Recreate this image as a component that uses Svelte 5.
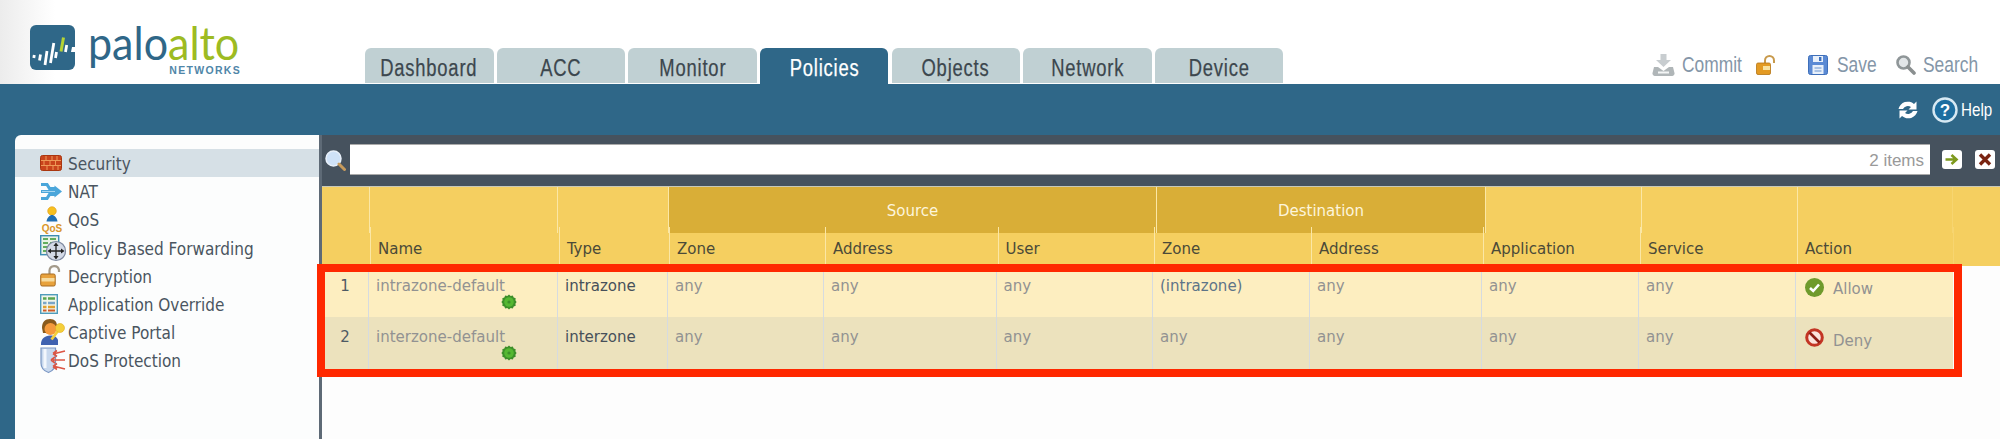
<script>
  const tabs = ['Dashboard', 'ACC', 'Monitor', 'Policies', 'Objects', 'Network', 'Device'];
  const active = 'Policies';
  const nav = ['Security', 'NAT', 'QoS', 'Policy Based Forwarding', 'Decryption', 'Application Override', 'Captive Portal', 'DoS Protection'];
  const labels = ['', 'Name', 'Type', 'Zone', 'Address', 'User', 'Zone', 'Address', 'Application', 'Service', 'Action', ''];
  const rows = [
    { n: 1, name: 'intrazone-default', type: 'intrazone', dest: '(intrazone)', action: 'Allow' },
    { n: 2, name: 'interzone-default', type: 'interzone', dest: 'any', action: 'Deny' }
  ];
</script>

{#snippet gear()}
  <svg class="gear" viewBox="0 0 16 16" width="16" height="16" aria-hidden="true">
    <path d="M8 .6l1.700 1.300 2.100-.4.9 1.900 2 .8-.3 2.100L15.600 8l-1.200 1.700.3 2.100-2 .8-.9 1.900-2.100-.4L8 15.400l-1.700-1.300-2.100.4-.9-1.900-2-.8.3-2.100L.4 8l1.200-1.700-.3-2.100 2-.8.9-1.900 2.100.4z" fill="#3d8f2a"/>
    <circle cx="8" cy="8" r="4.800" fill="#55b832"/>
    <circle cx="8" cy="8" r="1.600" fill="#3d8f2a"/>
  </svg>
{/snippet}

{#snippet navIcon(name)}
  {#if name === 'Security'}
    <svg viewBox="0 0 22 16" width="22" height="16" aria-hidden="true">
      <rect x=".5" y=".5" width="21" height="15" rx="2" fill="#c9441c" stroke="#a9360f"/>
      <path d="M1 5.500h20M1 10.500h20M6 1v4.500M12 1v4.500M17 1v4.500M4 5.500v5M10 5.500v5M15.500 5.500v5M7 10.500v4.500M13 10.500v4.500M18 10.500v4.500" stroke="#ee9a58" stroke-width="1"/>
    </svg>
  {:else if name === 'NAT'}
    <svg viewBox="0 0 22 19" width="22" height="19" aria-hidden="true">
      <path d="M1 2.500h6l2.500 4h6.500M1 9.500h15M1 16.500h6l2.500-4h6.500" fill="none" stroke="#4aa6da" stroke-width="3.200"/>
      <path d="M14.500 3.500l7.500 6-7.500 6z" fill="#4aa6da"/>
      <path d="M2 9.500h13" stroke="#bfe2f5" stroke-width=".8"/>
    </svg>
  {:else if name === 'QoS'}
    <svg viewBox="0 0 24 26" width="24" height="26" aria-hidden="true">
      <circle cx="12" cy="5" r="4.300" fill="#f7c020" stroke="#dd9a18" stroke-width=".6"/>
      <path d="M6.500 15.500c.5-4 3.500-6.500 5.500-6.500s5 2.500 5.500 6.500z" fill="#1f6fb4"/>
      <text x="12" y="25.500" text-anchor="middle" class="qos">QoS</text>
    </svg>
  {:else if name === 'Policy Based Forwarding'}
    <svg viewBox="0 0 26 26" width="26" height="26" aria-hidden="true">
      <rect x=".7" y=".7" width="18" height="19" fill="#e9f2e5" stroke="#3f8db4" stroke-width="1.400"/>
      <path d="M3 4h5M10 4h6M3 8h5M10 8h6M3 12h5M3 16h5" stroke="#62ad5e" stroke-width="2"/>
      <circle cx="16" cy="16" r="9.500" fill="#d3d9e6" stroke="#7e89a0" stroke-width="1.200"/>
      <path d="M16 10v12M10 16h12" stroke="#222" stroke-width="1.300"/>
      <path d="M16 7.500l2.600 3.500h-5.200zM16 24.500l2.600-3.500h-5.200zM7.500 16l3.500-2.600v5.200zM24.500 16L21 13.400v5.200z" fill="#222"/>
    </svg>
  {:else if name === 'Decryption'}
    <svg viewBox="0 0 20 23" width="20" height="23" aria-hidden="true">
      <path d="M9.500 10V6.500a4.800 4.800 0 0 1 9.500-.5v2" fill="none" stroke="#a39a8a" stroke-width="2.200"/>
      <rect x=".7" y="10" width="14.500" height="12" rx="1.500" fill="#e8a23c" stroke="#a66a20"/>
      <rect x="1.500" y="14" width="13" height="3.500" fill="#f6dca0"/>
    </svg>
  {:else if name === 'Application Override'}
    <svg viewBox="0 0 18 20" width="18" height="20" aria-hidden="true">
      <rect x=".7" y=".7" width="16.600" height="18.600" fill="#f1f5ec" stroke="#4f9cbc" stroke-width="1.400"/>
      <path d="M3 4.500h3.500M8 4.500h7" stroke="#5aa650" stroke-width="2.400"/>
      <path d="M3 9h3.500M8 9h7" stroke="#7aa6c8" stroke-width="2.400"/>
      <path d="M3 13h3.500M8 13h7" stroke="#e0a030" stroke-width="2.400"/>
      <path d="M3 16.500h3.500M8 16.500h7" stroke="#d05a28" stroke-width="2"/>
    </svg>
  {:else if name === 'Captive Portal'}
    <svg viewBox="0 0 25 28" width="25" height="28" aria-hidden="true">
      <path d="M2 10c0-6 3-9 8-9s7 3 7 7l-3 1-7 6H3z" fill="#8a5a1c"/>
      <circle cx="10.500" cy="11" r="6" fill="#f59a3c"/>
      <path d="M1 27c-.5-6 4-9.500 9-9.500s7 2 8 4.500v5z" fill="#3f62b0"/>
      <path d="M17.500 13.500l-6 8" stroke="#f4cf3a" stroke-width="2.800"/>
      <circle cx="20" cy="10" r="4.500" fill="#f4cf3a" stroke="#e0ae20" stroke-width=".6"/>
    </svg>
  {:else}
    <svg viewBox="0 0 26 26" width="26" height="26" aria-hidden="true">
      <path d="M1 1h14.500v15c0 5-3 8-7 9.500C4 24 1 21 1 16z" fill="#c9d9ee" stroke="#7c98c4" stroke-width="1.200"/>
      <path d="M5 2v19" stroke="#f3f7fc" stroke-width="3"/>
      <path d="M25 4l-10 2.500M25 13H13M25 22l-10-2.500M13 6.500l4-3M13 6.500l4 3M11 13l4-3M11 13l4 3M13 19.500l4-3M13 19.500l4 3" fill="none" stroke="#dc5544" stroke-width="1.600"/>
    </svg>
  {/if}
{/snippet}

<div class="page">
  <header class="top">
    <div class="logo">
      <svg class="mark" viewBox="0 0 45 45" width="45" height="45" aria-hidden="true">
        <rect width="45" height="45" rx="6" fill="#2f6788"/>
        <g fill="none" stroke="#fff" stroke-width="2.800">
          <path d="M3.800 33l.5-3"/>
          <path d="M9.500 35.500l1-6"/>
          <path d="M15 40l2-14"/>
          <path d="M20.500 38l3.300-20"/>
          <path d="M25.500 33l1-6"/>
          <path d="M35.500 27l1.200-7"/>
        </g>
        <path d="M31 26.500l2.500-14" stroke="#b5d334" stroke-width="3" fill="none"/>
        <path d="M45 22h-3l-1 5h4z" fill="#fff"/>
      </svg>
      <div class="wordmark">
        <div class="word"><span class="palo">palo</span><span class="alto">alto</span></div>
        <div class="networks">NETWORKS</div>
      </div>
    </div>

    <nav class="tabs">
      {#each tabs as t}
        <div class="tab" class:active={t === active}><span class="tab-label">{t}</span></div>
      {/each}
    </nav>

    <div class="tools">
      <svg viewBox="0 0 23 22" width="23" height="22" aria-hidden="true">
        <path d="M8.500 0h6v6H19l-7.500 7L4 6h4.500z" fill="#c8cdd0"/>
        <path d="M2 13h4l5.500 4 5.500-4h4l1.500 6a2.500 2.500 0 0 1-2.500 3H3a2.500 2.500 0 0 1-2.500-3z" fill="#b0b6b8"/>
        <rect x="6" y="17.500" width="11" height="2" fill="#f4f6f6"/>
      </svg>
      <span class="tool commit">Commit</span>
      <svg class="lock" viewBox="0 0 20 20" width="20" height="20" aria-hidden="true">
        <path d="M9 8V5.500a4.500 4.500 0 0 1 9 0V8" fill="none" stroke="#c89a4c" stroke-width="2"/>
        <rect x=".5" y="8" width="14" height="11.500" rx="1.500" fill="#e39a23" stroke="#b57514" stroke-width=".8"/>
        <rect x="7" y="11" width="7" height="4" fill="#f8e2a0"/>
      </svg>
      <svg class="save" viewBox="0 0 20 20" width="20" height="20" aria-hidden="true">
        <rect x=".5" y=".5" width="19" height="19" rx="2" fill="#5b8ad4" stroke="#3e6fba"/>
        <rect x="5" y="1" width="10" height="6" fill="#e8f0fa"/>
        <rect x="11" y="2" width="2.400" height="4" fill="#3e6fba"/>
        <rect x="4.500" y="10" width="11" height="9" fill="#e8f0fa"/>
        <path d="M6.500 13h7M6.500 16h7" stroke="#6b93cf" stroke-width="1.200"/>
      </svg>
      <span class="tool savelabel">Save</span>
      <svg class="find" viewBox="0 0 20 20" width="20" height="20" aria-hidden="true">
        <circle cx="7.500" cy="7.500" r="6" fill="#e2e6e8" stroke="#8f9698" stroke-width="2.600"/>
        <path d="M12 12l6 6" stroke="#8a8f90" stroke-width="3.600" stroke-linecap="round"/>
      </svg>
      <span class="tool searchlabel">Search</span>
    </div>
  </header>

  <main class="body">
    <div class="strip">
      <svg viewBox="0 0 22 20" width="22" height="20" aria-hidden="true">
        <path d="M1.500 9a9.500 9.500 0 0 1 15.500-5l2.500-2.500v8h-8l2.500-2.500A5.500 5.500 0 0 0 6 9z" fill="#fff"/>
        <path d="M20.500 11a9.500 9.500 0 0 1-15.500 5l-2.500 2.500v-8h8L8 13a5.500 5.500 0 0 0 8-2z" fill="#fff"/>
      </svg>
      <svg class="help-icon" viewBox="0 0 26 26" width="26" height="26" aria-hidden="true">
        <circle cx="13" cy="13" r="11.500" fill="#1d6ea0" stroke="#d7e9f3" stroke-width="2.400"/>
        <text x="13" y="19" text-anchor="middle" class="q">?</text>
      </svg>
      <span class="help">Help</span>
    </div>

    <div class="work">
      <aside class="side">
        {#each nav as item, i}
          <div class="nav-item" class:sel={i === 0}>
            <span class="nav-icon">{@render navIcon(item)}</span>
            <span class="nav-text">{item}</span>
          </div>
        {/each}
      </aside>

      <section class="panel">
        <div class="bar">
          <svg class="glass" viewBox="0 0 21 21" width="21" height="21" aria-hidden="true">
            <circle cx="8.500" cy="8.500" r="7.500" fill="#cfe2f8" stroke="#e8f0fa" stroke-width="1.500"/>
            <path d="M14 14l5.500 5.500" stroke="#c69a5c" stroke-width="3" stroke-linecap="round"/>
          </svg>
          <div class="filter">2 items</div>
          <span class="btn">
            <svg viewBox="0 0 20 19" width="20" height="19" aria-hidden="true">
              <rect width="20" height="19" rx="3" fill="#fff"/>
              <path d="M3.500 9.500h9M9.500 5l5 4.500-5 4.500" fill="none" stroke="#7e9a1e" stroke-width="2.600"/>
            </svg>
          </span>
          <span class="btn">
            <svg viewBox="0 0 20 19" width="20" height="19" aria-hidden="true">
              <rect width="20" height="19" rx="3" fill="#fff"/>
              <path d="M5 4.500l10 10M15 4.500l-10 10" stroke="#7a2412" stroke-width="3.400"/>
            </svg>
          </span>
        </div>

        <div class="groups">
          <div class="g"></div><div class="g"></div><div class="g"></div>
          <div class="g band">Source</div>
          <div class="g band">Destination</div>
          <div class="g"></div><div class="g"></div><div class="g"></div><div class="g"></div>
        </div>

        <div class="cols heads">
          {#each labels as l}
            <div class="h">{l}</div>
          {/each}
        </div>

        {#each rows as r, i}
          <div class="cols row" class:alt={i === 1}>
            <div class="c num">{r.n}</div>
            <div class="c namecell"><span class="muted">{r.name}</span>{@render gear()}</div>
            <div class="c strong">{r.type}</div>
            <div class="c muted">any</div>
            <div class="c muted">any</div>
            <div class="c muted">any</div>
            <div class="c" class:muted={r.dest === 'any'} class:dest={r.dest !== 'any'}>{r.dest}</div>
            <div class="c muted">any</div>
            <div class="c muted">any</div>
            <div class="c muted">any</div>
            <div class="c action">
              {#if r.action === 'Allow'}
                <svg viewBox="0 0 19 19" width="19" height="19" aria-hidden="true">
                  <circle cx="9.500" cy="9.500" r="9.500" fill="#6f9a2c"/>
                  <path d="M5 10l3.200 3 5.800-6.500" fill="none" stroke="#fff" stroke-width="2.600"/>
                </svg>
              {:else}
                <svg viewBox="0 0 19 19" width="19" height="19" aria-hidden="true">
                  <circle cx="9.500" cy="9.500" r="7.800" fill="#fbe3dc" stroke="#c33524" stroke-width="3"/>
                  <path d="M4.500 4.500l10 10" stroke="#8f1d14" stroke-width="2.600"/>
                </svg>
              {/if}
              <span class="muted">{r.action}</span>
            </div>
          </div>
        {/each}

        <div class="highlight"></div>
      </section>
    </div>
  </main>
</div>

<style>
  :global(body) { margin: 0; background: #fff; }
  .page {
    height: 439px;
    display: flex;
    flex-direction: column;
    overflow: hidden;
    font-family: "DejaVu Sans Condensed", "DejaVu Sans", sans-serif;
    font-size: 16.700px;
  }

  .top {
    height: 84px;
    flex: none;
    display: flex;
    background: linear-gradient(90deg, #ececec 0, #fff 55px);
    font-family: "Liberation Sans", sans-serif;
  }

  .logo { width: 211px; margin-left: 30px; margin-top: 25px; display: flex; gap: 13px; }
  .mark { flex: none; }
  .wordmark { width: 153px; position: relative; }
  .word {
    font-family: "Lato", sans-serif;
    font-weight: 400;
    font-size: 47px;
    line-height: 40px;
    white-space: nowrap;
    margin-top: -3px;
    transform: scaleX(.915);
    transform-origin: 0 50%;
  }
  .palo { color: #2f6788; }
  .alto { color: #9dbb22; }
  .networks {
    position: absolute;
    right: 0;
    top: 40px;
    font-family: "Liberation Sans", sans-serif;
    font-weight: 700;
    font-size: 10.500px;
    line-height: 10px;
    letter-spacing: 1.300px;
    color: #4f86a8;
  }

  .tabs { display: flex; gap: 3.170px; margin-left: 124px; align-self: flex-end; height: 36px; }
  .tab {
    width: 128.500px;
    height: 35px;
    box-sizing: border-box;
    padding-top: 7px;
    background: #c0d0d3;
    border-radius: 6px 6px 0 0;
    text-align: center;
    font-size: 23px;
    line-height: 27px;
    color: #3c474e;
  }
  .tab-label {
    display: inline-block;
    letter-spacing: 1px;
    transform: scaleX(.8);
    -webkit-text-stroke: .25px currentColor;
  }
  .tab.active { height: 36px; background: #2f6788; color: #fff; }

  .tools {
    margin-left: auto;
    display: flex;
    align-items: center;
    height: 34px;
    margin-top: 48px;
    padding-right: 21px;
    color: #8496a8;
    font-size: 22px;
  }
  .tool {
    display: block;
    flex: none;
    white-space: nowrap;
    transform: scaleX(.79);
    transform-origin: 0 50%;
  }
  .commit { width: 61px; margin-left: 7px; }
  .lock { margin-left: 13px; }
  .save { margin-left: 32px; }
  .savelabel { width: 38px; margin-left: 9px; }
  .find { margin-left: 21px; }
  .searchlabel { width: 56px; margin-left: 7px; }

  .body { flex: 1; min-height: 0; background: #2f6788; display: flex; flex-direction: column; }
  .strip {
    height: 51px;
    flex: none;
    display: flex;
    align-items: center;
    justify-content: flex-end;
    padding-right: 8px;
    box-sizing: border-box;
    color: #fff;
    font-family: "Liberation Sans", sans-serif;
    font-size: 19px;
  }
  .help-icon { margin-left: 13px; }
  .help { width: 31px; margin-left: 3px; white-space: nowrap; transform: scaleX(.8); transform-origin: 0 50%; }
  .q { font: 700 17px "Liberation Sans", sans-serif; fill: #fff; }

  .work { flex: 1; min-height: 0; display: flex; padding-left: 15px; }
  .side {
    width: 304px;
    flex: none;
    box-sizing: border-box;
    padding-top: 14px;
    background: #fcfdfd;
    border-radius: 6px 0 0 0;
    color: #4a5560;
    font-size: 17px;
  }
  .nav-item { height: 28.200px; display: flex; align-items: center; padding-left: 25px; }
  .nav-item.sel { background: #d6e0e6; }
  .nav-text { padding-top: 2px; white-space: nowrap; }
  .nav-icon { width: 28px; flex: none; display: flex; align-items: center; justify-content: flex-start; }
  .nav-icon svg { overflow: visible; }
  .qos { font: 700 10px "Liberation Sans", sans-serif; fill: #d9962a; }

  .panel {
    flex: 1;
    position: relative;
    border-left: 3px solid #5e6a76;
    background: #fdfdfd;
    min-width: 0;
  }
  .bar {
    height: 52px;
    box-sizing: border-box;
    background: #46525e;
    border-bottom: 1px solid #c9c9b8;
    display: flex;
    align-items: flex-start;
    padding-top: 9px;
  }
  .glass { margin: 6px 4px 0 3px; flex: none; }
  .filter {
    width: 1580px;
    height: 31px;
    box-sizing: border-box;
    background: #fff;
    border-top: 1px solid #aaa;
    border-bottom: 1px solid #aaa;
    padding-right: 6px;
    text-align: right;
    font: 17px/32px "Liberation Sans", sans-serif;
    color: #999;
  }
  .btn { flex: none; height: 19px; margin-top: 6px; }
  .btn:first-of-type { margin-left: 12px; }
  .btn + .btn { margin-left: 13px; }

  .groups, .cols { display: grid; color: #4b4a38; }
  .groups {
    height: 39.500px;
    grid-template-columns: 48px 188px 111px 488px 329px 156px 156px 155px 47px;
    background: #f5cf60;
  }
  .g { border-right: 1px solid #fbe7a5; }
  .g:nth-child(n+8) { border-right-color: #f7d570; }
  .g:last-child { border-right: 0; }
  .band {
    background: #d9ae37;
    color: #fdf5dc;
    text-align: center;
    line-height: 46px;
  }
  .cols {
    grid-template-columns: 48px 189px 110px 156px 172.500px 156.500px 157px 172px 157px 157px 156px 47px;
  }
  .heads { height: 39.500px; background: #f5cf60; }
  .h {
    border-left: 1px solid #fbe7a5;
    padding-left: 7px;
    line-height: 43px;
    white-space: nowrap;
  }
  .h:first-child { border-left: 0; }
  .h:last-child { border-left-color: #f7d570; }
  .row { height: 51px; background: #fdeec0; grid-template-columns: 47px 189px 110px 156px 172.500px 156.500px 157px 172px 157px 157px 157px; width: 1631px; }
  .row.alt { height: 52px; background: #ece2bd; }
  .c {
    border-right: 1px solid #d6dbe0;
    padding: 9px 0 0 7px;
    line-height: 20px;
    color: #8e9090;
    white-space: nowrap;
    position: relative;
    min-width: 0;
  }
  .c:last-child { border-right: 0; }
  .num { padding: 9px 0 0; text-align: center; color: #4e5a64; }
  .muted { color: #929292; }
  .strong { color: #47505a; }
  .dest { color: #5d7488; }
  .gear { position: absolute; right: 40px; top: 28px; }
  .action { display: flex; align-items: flex-start; gap: 9px; padding: 12px 0 0 9px; }
  .action svg { flex: none; }
  .row.alt .action { padding-top: 11px; }
  .row.alt .action span { margin-top: 2px; }
  .action span { margin-top: 0; }

  .highlight {
    position: absolute;
    left: -5px;
    top: 129px;
    width: 1645px;
    height: 113px;
    box-sizing: border-box;
    border: 8px solid #ff2800;
    pointer-events: none;
  }
</style>
